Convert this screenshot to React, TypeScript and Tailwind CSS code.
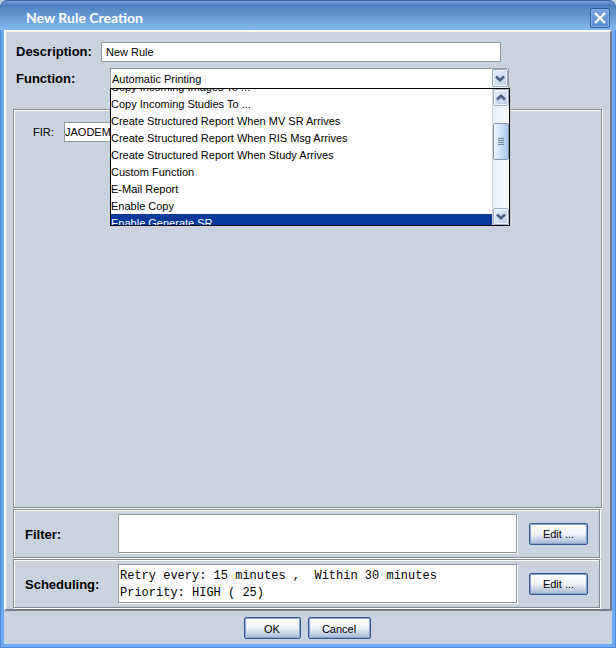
import { useState } from "react";

const functions = [
  "Copy Incoming Images To ...",
  "Copy Incoming Studies To ...",
  "Create Structured Report When MV SR Arrives",
  "Create Structured Report When RIS Msg Arrives",
  "Create Structured Report When Study Arrives",
  "Custom Function",
  "E-Mail Report",
  "Enable Copy",
  "Enable Generate SR",
];

const buttonClass =
  "h-[22px] rounded-xs border border-[#34588f] bg-linear-to-b from-white via-[#eef2f8] via-50% to-[#a4b7d4] pt-px text-[11px] leading-4 text-black shadow-[inset_0_0_0_1px_#8ba5c9]";

const groupClass =
  "border border-[#858b93] shadow-[inset_1px_1px_0_#fff,1px_1px_0_#fff]";

function Chevron({ up = false }: { up?: boolean }) {
  return (
    <svg width="10" height="7" viewBox="0 0 10 7" fill="none" aria-hidden="true">
      <path
        d={up ? "M1 5.5 5 1.8 9 5.5" : "M1 1.5 5 5.2 9 1.5"}
        stroke="#4d5f80"
        strokeWidth="2.6"
      />
    </svg>
  );
}

function ArrowButton({ up = false, label }: { up?: boolean; label: string }) {
  return (
    <button
      type="button"
      aria-label={label}
      className="flex h-[17px] w-full shrink-0 items-center justify-center rounded-xs border border-[#9aaec6] bg-linear-to-br from-[#eaf2fe] to-[#b9cce6] shadow-[inset_0_0_0_1px_#f2f7fd]"
    >
      <Chevron up={up} />
    </button>
  );
}

function FunctionList() {
  return (
    <div className="absolute inset-x-0 top-5 z-10 -mr-px flex h-[138px] border border-black bg-white">
      <div className="flex-1 overflow-hidden">
        <ul role="listbox" aria-label="Functions" className="-mt-[11px]">
          {functions.map((name) => {
            const selected = name === "Enable Generate SR";
            return (
              <li
                key={name}
                role="option"
                aria-selected={selected}
                className={
                  selected
                    ? "h-[17px] bg-[#08399c] leading-[19px] whitespace-nowrap text-white"
                    : "h-[17px] leading-[19px] whitespace-nowrap"
                }
              >
                {name}
              </li>
            );
          })}
        </ul>
      </div>
      <div className="flex w-[17px] flex-col border-l border-[#d4d4d4] bg-linear-to-r from-[#e4effc] to-[#fafcff]">
        <ArrowButton up label="Scroll up" />
        {/* Scroll thumb */}
        <div className="mt-[17px] flex h-[37px] flex-col items-center justify-center gap-px rounded-xs border border-[#8398b0] bg-linear-to-r from-[#f0f7ff] to-[#a9c6ea]">
          <span className="h-px w-1.5 bg-[#7487a3]" />
          <span className="h-px w-1.5 bg-[#7487a3]" />
          <span className="h-px w-1.5 bg-[#7487a3]" />
          <span className="h-px w-1.5 bg-[#7487a3]" />
        </div>
        <div className="flex-1" />
        <ArrowButton label="Scroll down" />
      </div>
    </div>
  );
}

function SummaryRow({ id, label, value }: { id: string; label: string; value: string }) {
  return (
    <div className={`mr-0.5 flex h-[49px] items-center pr-[11px] pl-[11px] ${groupClass}`}>
      <label htmlFor={id} className="w-[93px] shrink-0 pt-0.5 text-[13px] font-bold">
        {label}
      </label>
      <textarea
        id={id}
        readOnly
        defaultValue={value}
        className="h-[39px] min-w-0 flex-1 resize-none overflow-hidden border border-[#949a9f] bg-white px-px pt-[3px] font-['Liberation_Mono',monospace] text-[12px] leading-[17px] shadow-[1px_1px_0_#fff] outline-none"
      />
      <button type="button" className={`ml-3 w-[59px] shrink-0 ${buttonClass}`}>
        Edit ...
      </button>
    </div>
  );
}

export default function App() {
  const [description, setDescription] = useState("New Rule");
  const [fir, setFir] = useState("JAODEMO");

  return (
    <div className="bg-[#c4cfdd]">
      <main className="flex min-h-screen flex-col rounded-t-lg bg-[#6cacf2] px-1 pb-1 font-['Liberation_Sans',Arial,sans-serif] text-[11px] text-black shadow-[inset_0_0_0_1px_#4d88d4]">
        {/* Title bar */}
        <header className="-mx-1 flex h-[30px] shrink-0 items-center justify-between rounded-t-lg border-t border-[#3f66a8] bg-linear-to-b from-[#7ba0d8] via-[#527fc0] via-15% to-[#83bbf0] pt-1 pr-1.5 pl-[26px]">
          <h1 className="font-['Lato',sans-serif] text-[14px] leading-5 font-bold text-white">
            New Rule Creation
          </h1>
          <button
            type="button"
            aria-label="Close"
            className="flex size-5 items-center justify-center rounded-xs border border-[#305f9f] bg-linear-to-b from-[#78a5df] to-[#568bd0] shadow-[inset_0_0_0_1px_#82b3e7]"
          >
            <svg width="12" height="12" viewBox="0 0 12 12" aria-hidden="true">
              <path d="M1 1 11 11M11 1 1 11" stroke="#fff" strokeWidth="2.2" />
            </svg>
          </button>
        </header>

        <section className="flex flex-1 flex-col border-t-2 border-r-2 border-b-2 border-l-2 border-t-white border-r-[#747986] border-b-[#747986] border-l-white bg-[#c9d3df] pr-2 pl-[7px]">
          <div className="flex items-center pt-[10px] pl-[3px]">
            <label htmlFor="description" className="w-[85px] shrink-0 text-[13px] leading-5 font-bold">
              Description:
            </label>
            <input
              id="description"
              value={description}
              onChange={(e) => setDescription(e.target.value)}
              className="mr-[101px] h-5 min-w-0 flex-1 border border-[#949a9f] bg-white px-1 outline-none"
            />
          </div>

          <div className="mt-1.5 flex items-center pl-[3px]">
            <label htmlFor="function" className="w-[94px] shrink-0 text-[13px] leading-5 font-bold">
              Function:
            </label>
            <div className="relative mr-[93px] flex-1">
              <select
                id="function"
                defaultValue="Automatic Printing"
                className="block h-[21px] w-full appearance-none border border-[#949a9f] bg-white pt-0.5 pl-px leading-[17px] outline-none"
              >
                <option>Automatic Printing</option>
                {functions.map((name) => (
                  <option key={name}>{name}</option>
                ))}
              </select>
              <span className="pointer-events-none absolute top-px right-px flex h-[18px] w-4 items-center justify-center rounded-xs border border-[#8fa6c2] bg-linear-to-br from-[#eaf2fe] to-[#b9cce6] shadow-[inset_0_0_0_1px_#f2f7fd]">
                <Chevron />
              </span>
              <FunctionList />
            </div>
          </div>

          <div className={`mt-5 flex-1 pt-3 pl-[19px] ${groupClass}`}>
            <div className="flex items-center">
              <label htmlFor="fir" className="w-[31px]">
                FIR:
              </label>
              <input
                id="fir"
                value={fir}
                onChange={(e) => setFir(e.target.value)}
                className="h-5 w-24 border border-[#949a9f] bg-white outline-none"
              />
            </div>
          </div>

          <div className="mt-px flex flex-col gap-px pb-px">
            <SummaryRow id="filter" label="Filter:" value="" />
            <SummaryRow
              id="scheduling"
              label="Scheduling:"
              value={"Retry every: 15 minutes ,  Within 30 minutes\nPriority: HIGH ( 25)"}
            />
          </div>
        </section>

        <footer className="flex justify-center gap-[7px] bg-[#c9d3df] pt-1.5 pr-0.5 pb-[5px]">
          <button type="button" className={`w-[57px] ${buttonClass}`}>
            OK
          </button>
          <button type="button" className={`w-[63px] ${buttonClass}`}>
            Cancel
          </button>
        </footer>
      </main>
    </div>
  );
}
